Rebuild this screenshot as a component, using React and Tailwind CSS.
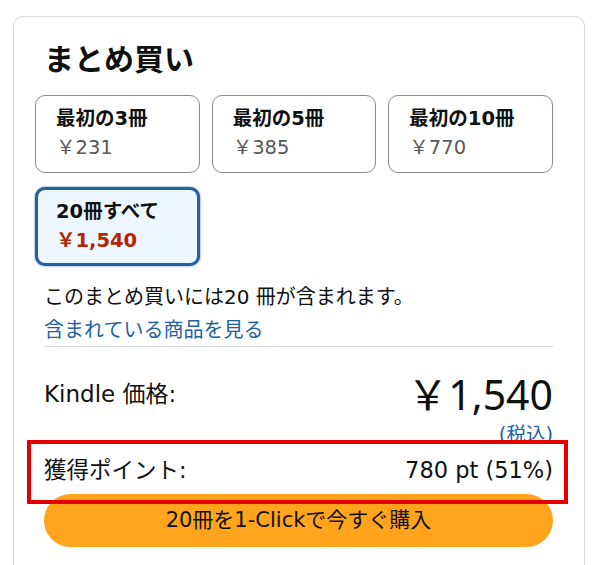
export default function App() {
  const options = [
    { title: '最初の3冊', price: '￥231' },
    { title: '最初の5冊', price: '￥385' },
    { title: '最初の10冊', price: '￥770' },
  ];

  return (
    <div className="relative w-[600px] h-[565px] overflow-hidden bg-white text-[#0f1111] font-['DejaVu_Sans','Noto_Sans_CJK_JP',sans-serif]">
      {/* card */}
      <div className="ml-[13px] mt-[16px] w-[572px] border border-[#d5d9d9] rounded-[10px] pl-[21px] pr-[31px] pt-[25px] pb-[40px]">
        <h2 className="pl-[9px] text-[30px] font-bold leading-[36px]">まとめ買い</h2>

        <div className="mt-[17px] grid grid-cols-3 gap-x-[12px] gap-y-[14px]">
          {options.map((o) => (
            <div key={o.title} className="h-[78px] border border-[#888c8c] rounded-[10px] pl-[20px] pt-[8px]">
              <div className="text-[19.5px] font-bold leading-[29px]">{o.title}</div>
              <div className="text-[19.5px] leading-[29px] text-[#565959]">{o.price}</div>
            </div>
          ))}
          <div className="h-[79px] border-[3px] border-[#2162a1] rounded-[10px] bg-[#eef7ff] pl-[18px] pt-[7px] shadow-[0_0_2px_#2162a1]">
            <div className="text-[19.5px] font-bold leading-[29px]">20冊すべて</div>
            <div className="text-[19.5px] font-bold leading-[29px] text-[#b12704]">￥1,540</div>
          </div>
        </div>

        <p className="pl-[9px] mt-[16px] text-[20px] leading-[30px]">このまとめ買いには20 冊が含まれます。</p>
        <a className="block pl-[9px] mt-[3px] text-[20px] leading-[30px] text-[#2162a1]">含まれている商品を見る</a>
        <div className="ml-[9px] mt-[1px] border-t border-[#d5d9d9]" />

        <div className="ml-[9px] mt-[23px] flex items-center justify-between">
          <span className="text-[23px] leading-[30px]">Kindle 価格:</span>
          <span className="text-[41px] leading-[48px] font-['Noto_Sans','Noto_Sans_CJK_JP',sans-serif]">￥1,540</span>
        </div>
        <div className="mt-[5px] text-right text-[19.5px] leading-[24px] text-[#2162a1]">(税込)</div>

        <div className="ml-[9px] mt-[8px] flex items-center justify-between text-[22.5px] leading-[30px]">
          <span>獲得ポイント:</span>
          <span>780 pt (51%)</span>
        </div>

        <button className="ml-[9px] mt-[9px] w-[509px] h-[53px] rounded-full bg-[#ffa41c] text-[21px] text-[#0f1111] flex items-center justify-center">
          20冊を1-Clickで今すぐ購入
        </button>
      </div>

      {/* annotation highlight */}
      <div className="absolute left-[27px] top-[440px] w-[541px] h-[64px] border-[4px] border-[#e50000]" />
    </div>
  );
}
